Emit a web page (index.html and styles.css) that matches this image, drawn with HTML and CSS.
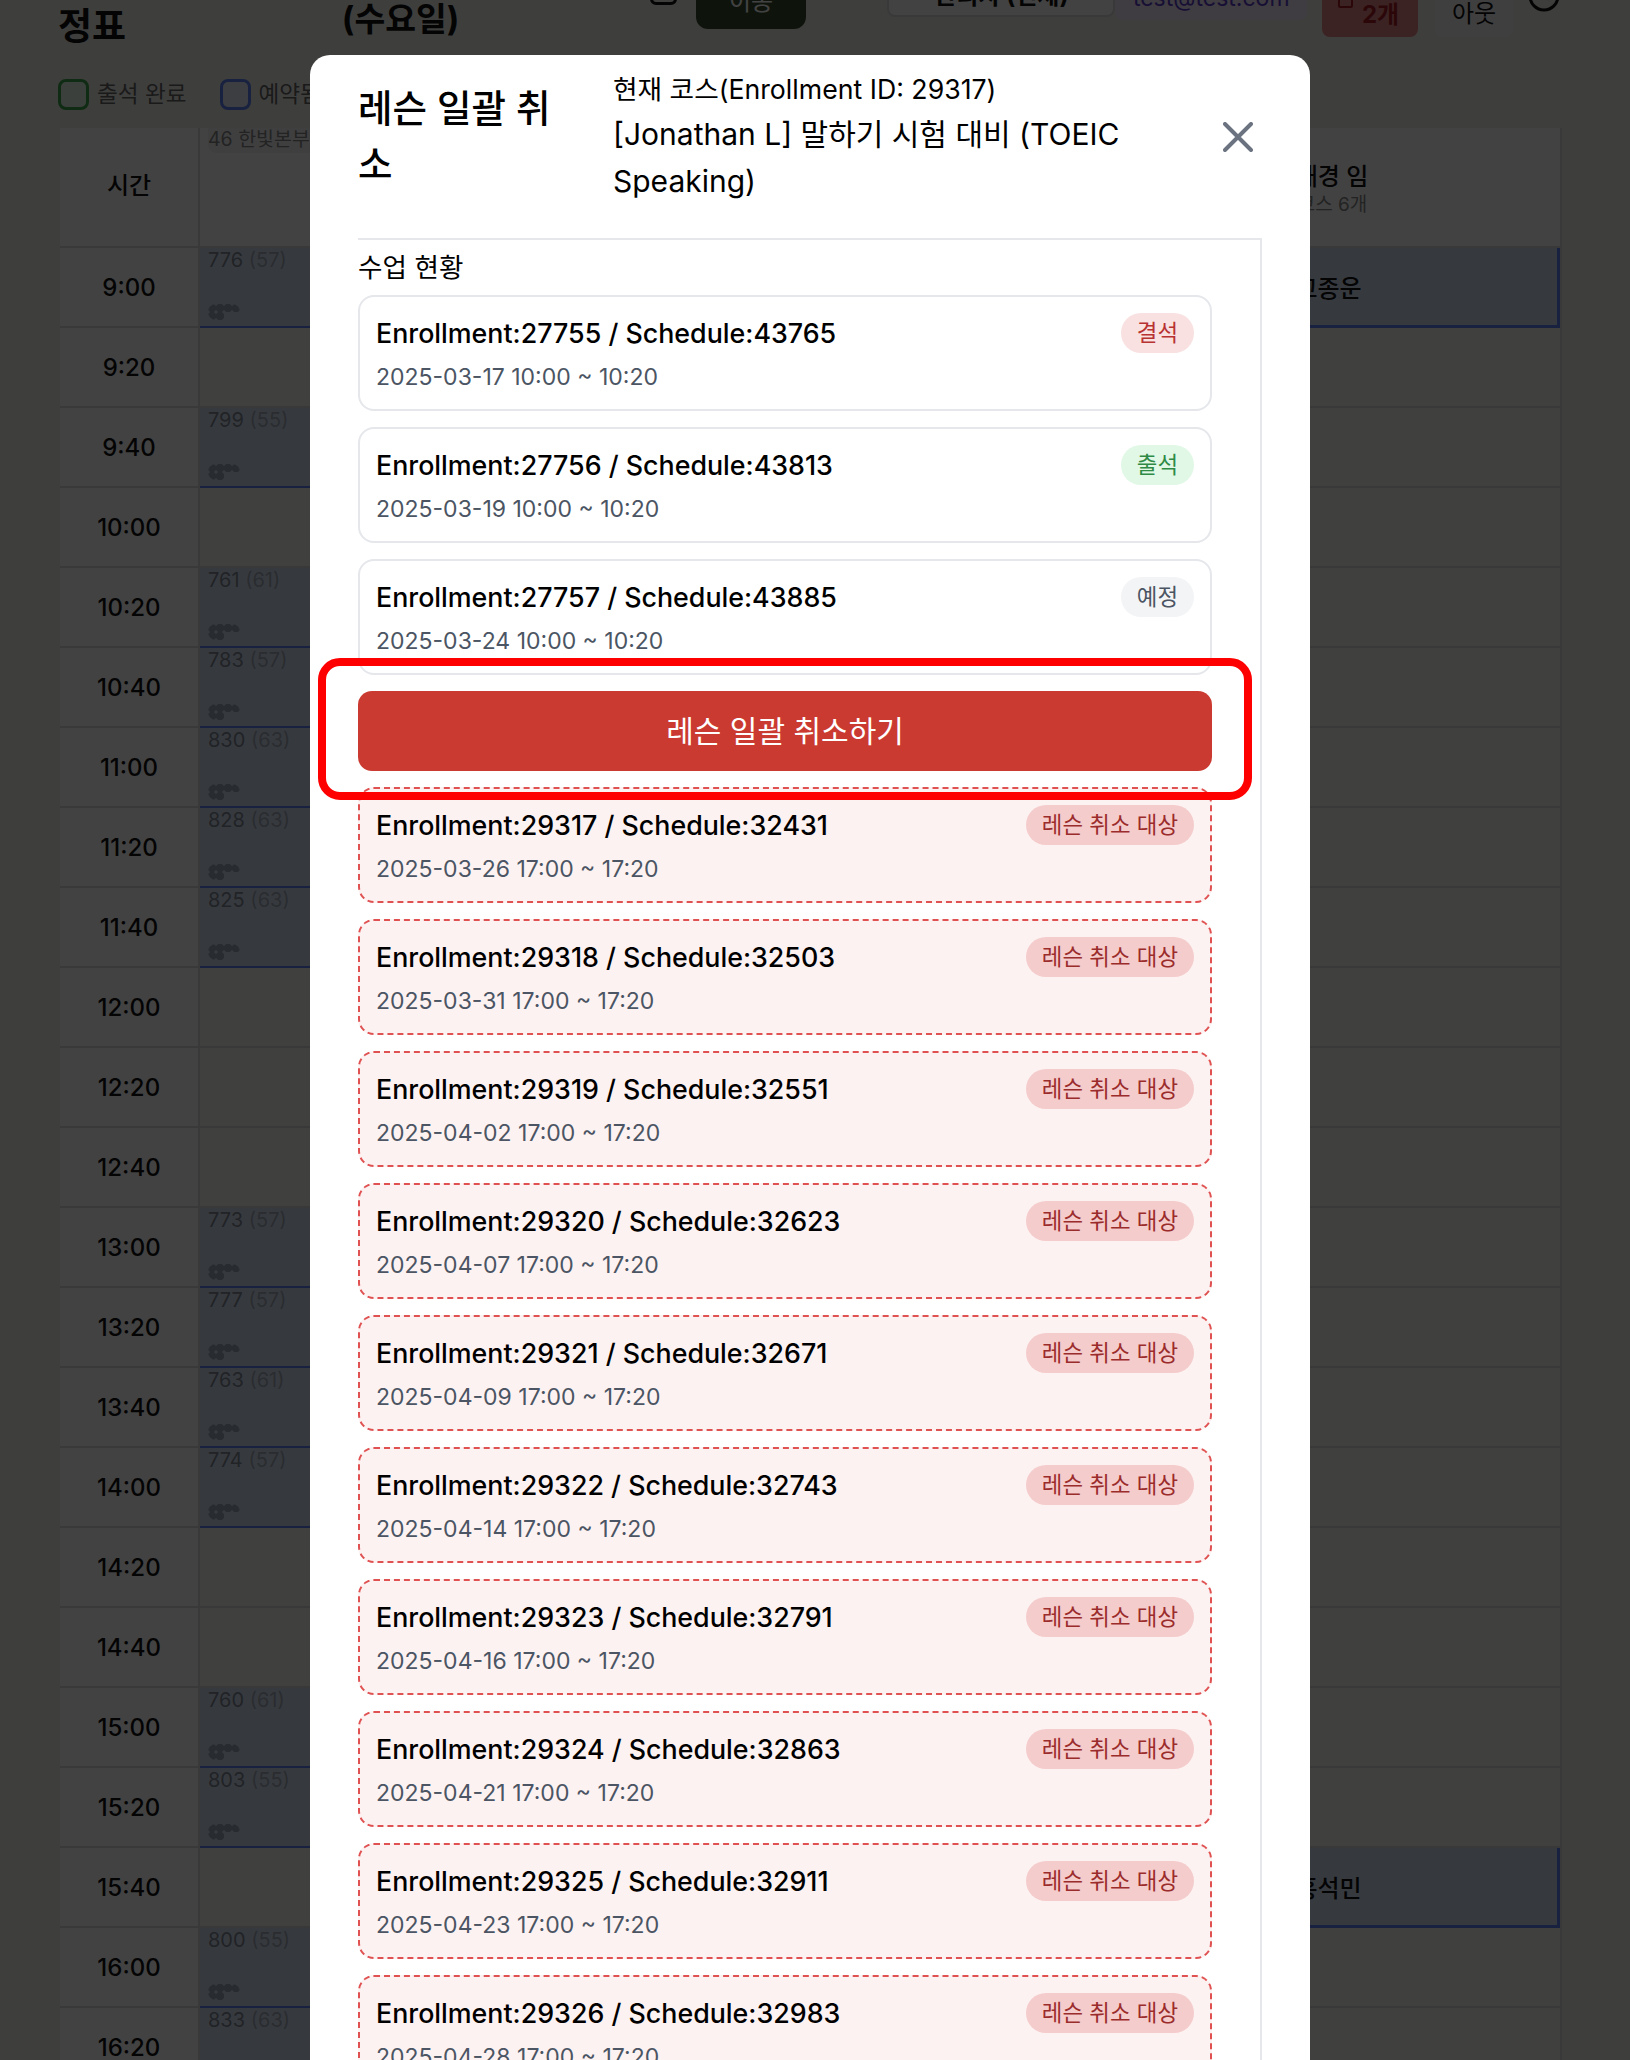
FILE: index.html
```html
<!DOCTYPE html>
<html lang="ko">
<head>
<meta charset="utf-8">
<title>레슨 일괄 취소</title>
<link rel="stylesheet" href="styles.css">
</head>
<body>
<div class="page">
  <header class="topbar">
    <h1 class="page-title">정표</h1>
    <h2 class="page-date">(수요일)</h2>
    <span class="check-box"></span>
    <button class="move-btn">이동</button>
    <div class="select-box">관리자 (전체)</div>
    <div class="email-box">test@test.com</div>
    <div class="alert-box">2개</div>
    <div class="logout-box">아웃</div>
    <svg class="clock" viewBox="0 0 32 32"><circle cx="16" cy="16" r="14"/><path d="M16 8v8l5 3"/></svg>
  </header>
  <div class="legend">
    <span class="swatch swatch-green"></span><span class="legend-text">출석 완료</span>
    <span class="swatch swatch-blue"></span><span class="legend-text">예약됨</span>
  </div>
  <div class="table">
    <div class="cell time head">시간</div>
    <div class="cell head col-mid"><span class="chip">46 한빛본부</span></div>
    <div class="cell head col-end"><div class="col-name">한재경 임</div><div class="col-sub">코스 6개</div></div>

    <div class="cell time">9:00</div><div class="cell slot booked"><span class="num">776 <i>(57)</i></span><span class="dots"></span></div><div class="cell booked-end">고종운</div>
    <div class="cell time">9:20</div><div class="cell"></div><div class="cell"></div>
    <div class="cell time">9:40</div><div class="cell slot booked"><span class="num">799 <i>(55)</i></span><span class="dots"></span></div><div class="cell"></div>
    <div class="cell time">10:00</div><div class="cell"></div><div class="cell"></div>
    <div class="cell time">10:20</div><div class="cell slot booked"><span class="num">761 <i>(61)</i></span><span class="dots"></span></div><div class="cell"></div>
    <div class="cell time">10:40</div><div class="cell slot booked"><span class="num">783 <i>(57)</i></span><span class="dots"></span></div><div class="cell"></div>
    <div class="cell time">11:00</div><div class="cell slot booked"><span class="num">830 <i>(63)</i></span><span class="dots"></span></div><div class="cell"></div>
    <div class="cell time">11:20</div><div class="cell slot booked"><span class="num">828 <i>(63)</i></span><span class="dots"></span></div><div class="cell"></div>
    <div class="cell time">11:40</div><div class="cell slot booked"><span class="num">825 <i>(63)</i></span><span class="dots"></span></div><div class="cell"></div>
    <div class="cell time">12:00</div><div class="cell"></div><div class="cell"></div>
    <div class="cell time">12:20</div><div class="cell"></div><div class="cell"></div>
    <div class="cell time">12:40</div><div class="cell"></div><div class="cell"></div>
    <div class="cell time">13:00</div><div class="cell slot booked"><span class="num">773 <i>(57)</i></span><span class="dots"></span></div><div class="cell"></div>
    <div class="cell time">13:20</div><div class="cell slot booked"><span class="num">777 <i>(57)</i></span><span class="dots"></span></div><div class="cell"></div>
    <div class="cell time">13:40</div><div class="cell slot booked"><span class="num">763 <i>(61)</i></span><span class="dots"></span></div><div class="cell"></div>
    <div class="cell time">14:00</div><div class="cell slot booked"><span class="num">774 <i>(57)</i></span><span class="dots"></span></div><div class="cell"></div>
    <div class="cell time">14:20</div><div class="cell"></div><div class="cell"></div>
    <div class="cell time">14:40</div><div class="cell"></div><div class="cell"></div>
    <div class="cell time">15:00</div><div class="cell slot booked"><span class="num">760 <i>(61)</i></span><span class="dots"></span></div><div class="cell"></div>
    <div class="cell time">15:20</div><div class="cell slot booked"><span class="num">803 <i>(55)</i></span><span class="dots"></span></div><div class="cell"></div>
    <div class="cell time">15:40</div><div class="cell"></div><div class="cell booked-end">홍석민</div>
    <div class="cell time">16:00</div><div class="cell slot booked"><span class="num">800 <i>(55)</i></span><span class="dots"></span></div><div class="cell"></div>
    <div class="cell time">16:20</div><div class="cell slot booked"><span class="num">833 <i>(63)</i></span><span class="dots"></span></div><div class="cell"></div>
  </div>
</div>

<div class="overlay">
  <section class="modal">
    <div class="modal-head">
      <h2 class="modal-title">레슨 일괄 취소</h2>
      <div class="modal-sub">
        <div class="sub-label">현재 코스(Enrollment ID: 29317)</div>
        <div class="sub-course">[Jonathan L] 말하기 시험 대비 (TOEIC Speaking)</div>
      </div>
      <button class="close" aria-label="닫기">
        <svg viewBox="0 0 30 30"><path d="M2 2l26 26M28 2L2 28"/></svg>
      </button>
    </div>
    <div class="modal-body">
      <div class="section-title">수업 현황</div>
      <div class="list">
        <article class="card"><div class="card-top"><span class="card-title">Enrollment:27755 / Schedule:43765</span><span class="badge badge-absent">결석</span></div><div class="card-date">2025-03-17 10:00 ~ 10:20</div></article>
        <article class="card"><div class="card-top"><span class="card-title">Enrollment:27756 / Schedule:43813</span><span class="badge badge-present">출석</span></div><div class="card-date">2025-03-19 10:00 ~ 10:20</div></article>
        <article class="card"><div class="card-top"><span class="card-title">Enrollment:27757 / Schedule:43885</span><span class="badge badge-planned">예정</span></div><div class="card-date">2025-03-24 10:00 ~ 10:20</div></article>
        <div class="cta-wrap">
          <button class="cta">레슨 일괄 취소하기</button>
          <span class="highlight"></span>
        </div>
        <article class="card card-cancel"><div class="card-top"><span class="card-title">Enrollment:29317 / Schedule:32431</span><span class="badge badge-cancel">레슨 취소 대상</span></div><div class="card-date">2025-03-26 17:00 ~ 17:20</div></article>
        <article class="card card-cancel"><div class="card-top"><span class="card-title">Enrollment:29318 / Schedule:32503</span><span class="badge badge-cancel">레슨 취소 대상</span></div><div class="card-date">2025-03-31 17:00 ~ 17:20</div></article>
        <article class="card card-cancel"><div class="card-top"><span class="card-title">Enrollment:29319 / Schedule:32551</span><span class="badge badge-cancel">레슨 취소 대상</span></div><div class="card-date">2025-04-02 17:00 ~ 17:20</div></article>
        <article class="card card-cancel"><div class="card-top"><span class="card-title">Enrollment:29320 / Schedule:32623</span><span class="badge badge-cancel">레슨 취소 대상</span></div><div class="card-date">2025-04-07 17:00 ~ 17:20</div></article>
        <article class="card card-cancel"><div class="card-top"><span class="card-title">Enrollment:29321 / Schedule:32671</span><span class="badge badge-cancel">레슨 취소 대상</span></div><div class="card-date">2025-04-09 17:00 ~ 17:20</div></article>
        <article class="card card-cancel"><div class="card-top"><span class="card-title">Enrollment:29322 / Schedule:32743</span><span class="badge badge-cancel">레슨 취소 대상</span></div><div class="card-date">2025-04-14 17:00 ~ 17:20</div></article>
        <article class="card card-cancel"><div class="card-top"><span class="card-title">Enrollment:29323 / Schedule:32791</span><span class="badge badge-cancel">레슨 취소 대상</span></div><div class="card-date">2025-04-16 17:00 ~ 17:20</div></article>
        <article class="card card-cancel"><div class="card-top"><span class="card-title">Enrollment:29324 / Schedule:32863</span><span class="badge badge-cancel">레슨 취소 대상</span></div><div class="card-date">2025-04-21 17:00 ~ 17:20</div></article>
        <article class="card card-cancel"><div class="card-top"><span class="card-title">Enrollment:29325 / Schedule:32911</span><span class="badge badge-cancel">레슨 취소 대상</span></div><div class="card-date">2025-04-23 17:00 ~ 17:20</div></article>
        <article class="card card-cancel"><div class="card-top"><span class="card-title">Enrollment:29326 / Schedule:32983</span><span class="badge badge-cancel">레슨 취소 대상</span></div><div class="card-date">2025-04-28 17:00 ~ 17:20</div></article>
      </div>
    </div>
  </section>
</div>
</body>
</html>
```

FILE: styles.css
```css
* { box-sizing: border-box; }
html, body { margin: 0; height: 2060px; overflow: hidden; }
body {
  background: #f0f0ec;
  font-family: Inter, "Noto Sans CJK KR", "Noto Sans", sans-serif;
  color: #111;
}

/* Page behind the dialog */
.page { padding: 0 70px 0 60px; margin-top: -30px; }
.topbar { display: flex; align-items: flex-end; height: 88px; }
.page-title { margin: 0 0 6px -2px; width: 284px; font-size: 37px; font-weight: 700; line-height: 50px; height: 50px; }
.page-date { margin: 0 0 14px; width: 308px; font-size: 33.5px; font-weight: 700; line-height: 50px; height: 50px; }
.check-box { width: 27px; height: 27px; border: 3px solid #111; border-radius: 6px; margin-bottom: 53px; margin-right: 19px; }
.move-btn { width: 111px; height: 60px; border: 0; border-radius: 12px; background: #384c30; color: #fff; font: inherit; font-size: 24px; margin-bottom: 29px; margin-right: 81px; }
.select-box { width: 228px; height: 60px; border: 2px solid #dcdcdc; border-radius: 8px; background: #fff; font-size: 24px; font-weight: 700; line-height: 74px; text-align: center; margin-bottom: 41px; }
.email-box { width: 192px; height: 60px; background: #f3e8ff; border-radius: 8px; color: #5b3fc8; font-size: 23px; line-height: 76px; text-align: center; margin-bottom: 38px; margin-right: 15px; }
.alert-box { position: relative; width: 96px; height: 60px; background: #e68787; border-radius: 8px; color: #a81e2a; font-size: 24px; font-weight: 700; text-align: right; padding-right: 19px; line-height: 76px; margin-bottom: 21px; margin-right: 17px; }
.alert-box::before { content: ""; position: absolute; left: 16px; top: 16px; width: 11px; height: 11px; border: 2px solid #a81e2a; border-radius: 2px; }
.logout-box { width: 78px; height: 60px; background: #f3f4f6; border-radius: 8px; font-size: 24px; text-align: center; line-height: 74px; margin-bottom: 21px; }
.clock { width: 32px; height: 32px; fill: none; stroke: #111; stroke-width: 3; margin-left: 15px; margin-bottom: 46px; }

.legend { display: flex; align-items: center; height: 32px; margin-top: 20px; margin-left: -2px; }
.swatch { width: 31px; height: 31px; border-radius: 8px; border: 3px solid; margin-right: 8px; }
.swatch-green { background: #e9f7ec; border-color: #3aa64a; }
.swatch-blue { background: #e8effb; border-color: #5f85f5; margin-left: 33px; }
.legend-text { font-size: 22.6px; line-height: 32px; color: #666; }

.table {
  display: grid;
  grid-template-columns: 138px 1fr 460px;
  grid-auto-rows: 78px;
  grid-template-rows: 118px;
  gap: 2px;
  margin-top: 18px;
  width: 1502px;
  background: #dcdcdc;
  padding-right: 2px;
}
.cell { background: #f6f6f2; min-width: 0; }
.time { background: #fff; display: flex; align-items: center; justify-content: center; font-size: 24px; font-weight: 500; }
.time.head { padding-bottom: 7px; }
.head { background: #fff; }
.col-mid { padding-left: 8px; }
.chip { display: inline-block; height: 25px; font-size: 19.5px; line-height: 23px; color: #888; background: #f3f4f6; border-radius: 0 0 8px 8px; padding: 0 8px 0 0; }
.col-end { display: flex; flex-direction: column; justify-content: center; align-items: center; }
.col-name { font-size: 24px; font-weight: 500; line-height: 34px; padding: 2px 18px 0 0; }
.col-sub { font-size: 19px; line-height: 22px; color: #888; padding-left: 5px; }
.booked { background: #d2dff4; border-bottom: 2px solid #5f85f5; margin-bottom: -2px; }
.slot { display: flex; flex-direction: column; justify-content: space-between; padding: 0 8px 6px; }
.num { font-size: 20px; line-height: 24px; color: #7f8792; }
.num i { font-style: normal; color: #a3abb7; }
.dots { display: block; width: 32px; height: 16px; border-radius: 8px;
  background:
    radial-gradient(circle at 4px 4px, #222 4px, transparent 4.5px) 0 0 / 8px 8px repeat-x,
    radial-gradient(circle at 4px 4px, #222 4px, transparent 4.5px) 0 8px / 8px 8px no-repeat,
    radial-gradient(circle at 4px 4px, #222 4px, transparent 4.5px) 8px 8px / 8px 8px no-repeat;
  opacity: .3;
}
.booked-end {
  background: #d2dff4;
  border-right: 3px solid #5f85f5;
  border-bottom: 3px solid #5f85f5;
  margin-bottom: -2px;
  display: flex; align-items: center; justify-content: center;
  font-size: 24px; font-weight: 500;
}

/* Dialog */
.overlay {
  position: fixed; inset: 0;
  background: rgba(0, 0, 0, .74);
  display: flex; justify-content: center; align-items: flex-start;
  padding: 55px 10px 0 0;
}
.modal {
  width: 1000px;
  background: #fff;
  border-radius: 20px 20px 0 0;
  padding: 0 48px;
  flex: none;
}
.modal-head { display: flex; align-items: center; padding: 12px 0 33px; }
.modal-title { margin: 2px 48px 0 0; width: 207px; flex: none; font-size: 37.5px; line-height: 56px; font-weight: 500; color: #000; }
.modal-sub { width: 530px; flex: none; color: #000; }
.sub-label { font-size: 26.7px; line-height: 44px; font-weight: 400; }
.sub-course { font-size: 30px; line-height: 47px; font-weight: 400; }
.close { margin: 2px 9px 0 auto; width: 30px; height: 30px; padding: 0; border: 0; background: none; }
.close svg { display: block; width: 30px; height: 30px; fill: none; stroke: #6b7280; stroke-width: 4; stroke-linecap: round; }

.modal-body { border-top: 2px solid #e5e7eb; border-right: 2px solid #e5e7eb; padding: 7px 48px 0 0; }
.section-title { font-size: 26.6px; line-height: 40px; font-weight: 400; color: #000; margin-bottom: 8px; }
.list { display: flex; flex-direction: column; gap: 16px; }
.card { border: 2px solid #e5e7eb; border-radius: 16px; background: #fff; padding: 16px; height: 116px; }
.card-cancel { border: 2px dashed #e05252; background: #fdf2f2; }
.card-top { display: flex; justify-content: space-between; align-items: center; height: 40px; }
.card-title { font-size: 26.8px; font-weight: 500; color: #000; line-height: 40px; }
.card-date { margin-top: 8px; font-size: 23px; line-height: 32px; color: #4b5563; }
.badge { height: 40px; border-radius: 20px; padding: 0 16px; font-size: 22.4px; line-height: 40px; }
.badge-absent { background: #f9e1e1; color: #b83232; }
.badge-present { background: #e1f8e6; color: #2f8a45; }
.badge-planned { background: #f3f4f6; color: #4b5563; }
.badge-cancel { background: #f5cccc; color: #9b2c2c; }

.cta-wrap { position: relative; }
.cta { display: block; width: 100%; height: 80px; padding: 0 0 5px; border: 0; border-radius: 14px; background: #cb3a31; color: #fff; font: inherit; font-size: 30px; font-weight: 400; }
.highlight { position: absolute; left: -40px; right: -40px; top: -33px; bottom: -29px; border: 8px solid #f00; border-radius: 22px; }
```
